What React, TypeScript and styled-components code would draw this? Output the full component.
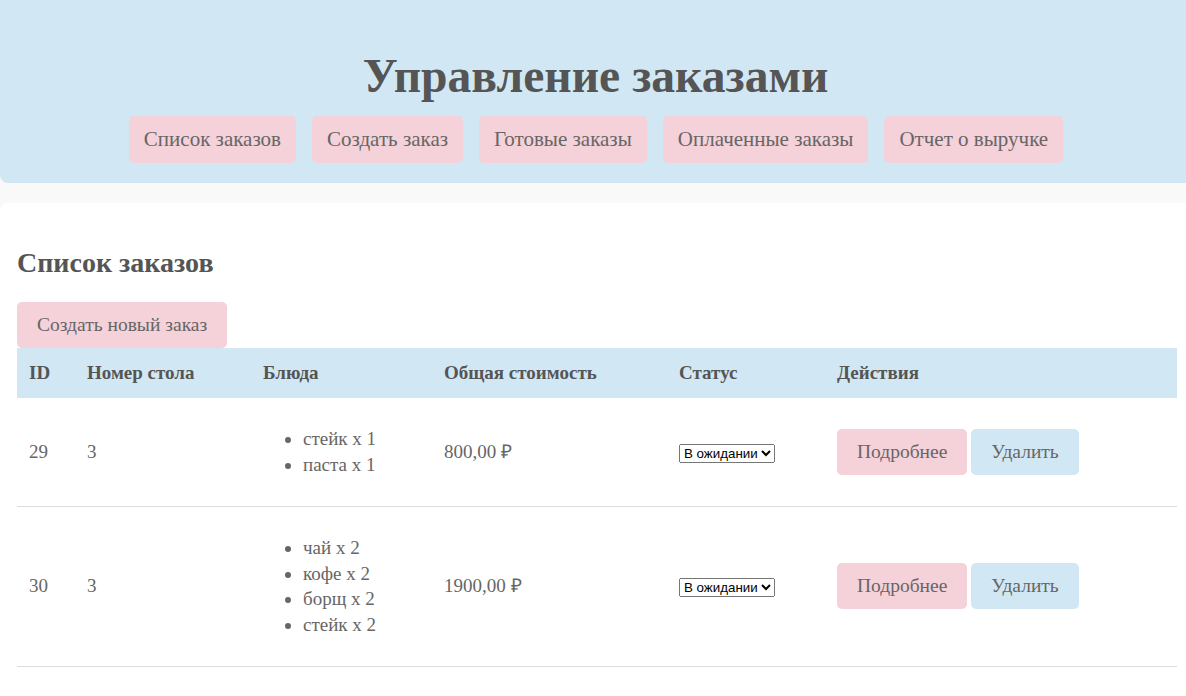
import React from "react";
import styled, { createGlobalStyle } from "styled-components";

const Global = createGlobalStyle`
  html, body { margin: 0; padding: 0; }
  body {
    background: #f9f9f9;
    font-family: "Liberation Serif", "Times New Roman", serif;
    color: #5a5a5a;
  }
`;

const BLUE = "#d1e8f4";
const PINK = "#f5d1d9";

const Header = styled.header`
  background: ${BLUE};
  padding: 50px 20px 20px;
  text-align: center;
  border-radius: 0 0 0 8px;
`;

const Title = styled.h1`
  margin: 0 0 13px;
  font-size: 47.6px;
  line-height: 53px;
  font-weight: bold;
  color: #555;
  padding-left: 5px;
`;

const Nav = styled.nav`
  display: flex;
  justify-content: center;
  gap: 16px;
  padding-left: 6px;
`;

const Button = styled.button<{ $tone?: "pink" | "blue"; $px?: number; $h?: number; $fs?: number }>`
  border: none;
  border-radius: 5px;
  background: ${(p) => (p.$tone === "blue" ? BLUE : PINK)};
  color: #666;
  font-family: "Liberation Serif", "Times New Roman", serif;
  font-size: ${(p) => p.$fs ?? 21}px;
  height: ${(p) => p.$h ?? 47}px;
  padding: 0 ${(p) => p.$px ?? 15}px;
  cursor: pointer;
`;

const Main = styled.main`
  margin-top: 20px;
  background: #fff;
  border-radius: 8px 0 0 0;
  padding: 43px 9px 0 17px;
  min-height: 500px;
`;

const SectionTitle = styled.h2`
  margin: 0 0 22px;
  font-size: 28px;
  line-height: 34px;
  font-weight: bold;
  color: #555;
`;

const Table = styled.table`
  width: 100%;
  table-layout: fixed;
  border-collapse: collapse;
  font-size: 19px;
  line-height: 25.5px;
`;

const Th = styled.th<{ $w?: number }>`
  box-sizing: border-box;
  background: ${BLUE};
  text-align: left;
  padding: 12px;
  font-weight: bold;
  color: #555;
  width: ${(p) => (p.$w ? `${p.$w}px` : "auto")};
`;

const Td = styled.td`
  padding: 12px;
  border-bottom: 1px solid #ddd;
  color: #666;
  vertical-align: middle;
`;

const Dishes = styled.ul`
  margin: 16.5px 0;
  padding-left: 40px;
`;

const Select = styled.select`
  font-family: "Liberation Sans", Arial, sans-serif;
  font-size: 13.33px;
  color: #000;
`;

const Actions = styled.div`
  display: flex;
  gap: 4px;
`;

const orders = [
  { id: 29, table: 3, dishes: ["стейк x 1", "паста x 1"], total: "800,00 ₽" },
  { id: 30, table: 3, dishes: ["чай x 2", "кофе x 2", "борщ x 2", "стейк x 2"], total: "1900,00 ₽" },
];

export default function App() {
  return (
    <>
      <Global />
      <Header>
        <Title>Управление заказами</Title>
        <Nav>
          <Button>Список заказов</Button>
          <Button>Создать заказ</Button>
          <Button>Готовые заказы</Button>
          <Button>Оплаченные заказы</Button>
          <Button>Отчет о выручке</Button>
        </Nav>
      </Header>
      <Main>
        <SectionTitle>Список заказов</SectionTitle>
        <Button $px={20} $h={46} $fs={19.5}>Создать новый заказ</Button>
        <Table>
          <thead>
            <tr>
              <Th $w={58}>ID</Th>
              <Th $w={176}>Номер стола</Th>
              <Th $w={181}>Блюда</Th>
              <Th $w={235}>Общая стоимость</Th>
              <Th $w={158}>Статус</Th>
              <Th>Действия</Th>
            </tr>
          </thead>
          <tbody>
            {orders.map((o) => (
              <tr key={o.id}>
                <Td>{o.id}</Td>
                <Td>{o.table}</Td>
                <Td>
                  <Dishes>
                    {o.dishes.map((d) => (
                      <li key={d}>{d}</li>
                    ))}
                  </Dishes>
                </Td>
                <Td>{o.total}</Td>
                <Td>
                  <Select defaultValue="pending">
                    <option value="pending">В ожидании</option>
                    <option value="ready">Готов</option>
                    <option value="paid">Оплачен</option>
                  </Select>
                </Td>
                <Td>
                  <Actions>
                    <Button $px={20} $h={46} $fs={19.5}>Подробнее</Button>
                    <Button $tone="blue" $px={20} $h={46} $fs={19.5}>Удалить</Button>
                  </Actions>
                </Td>
              </tr>
            ))}
          </tbody>
        </Table>
      </Main>
    </>
  );
}
